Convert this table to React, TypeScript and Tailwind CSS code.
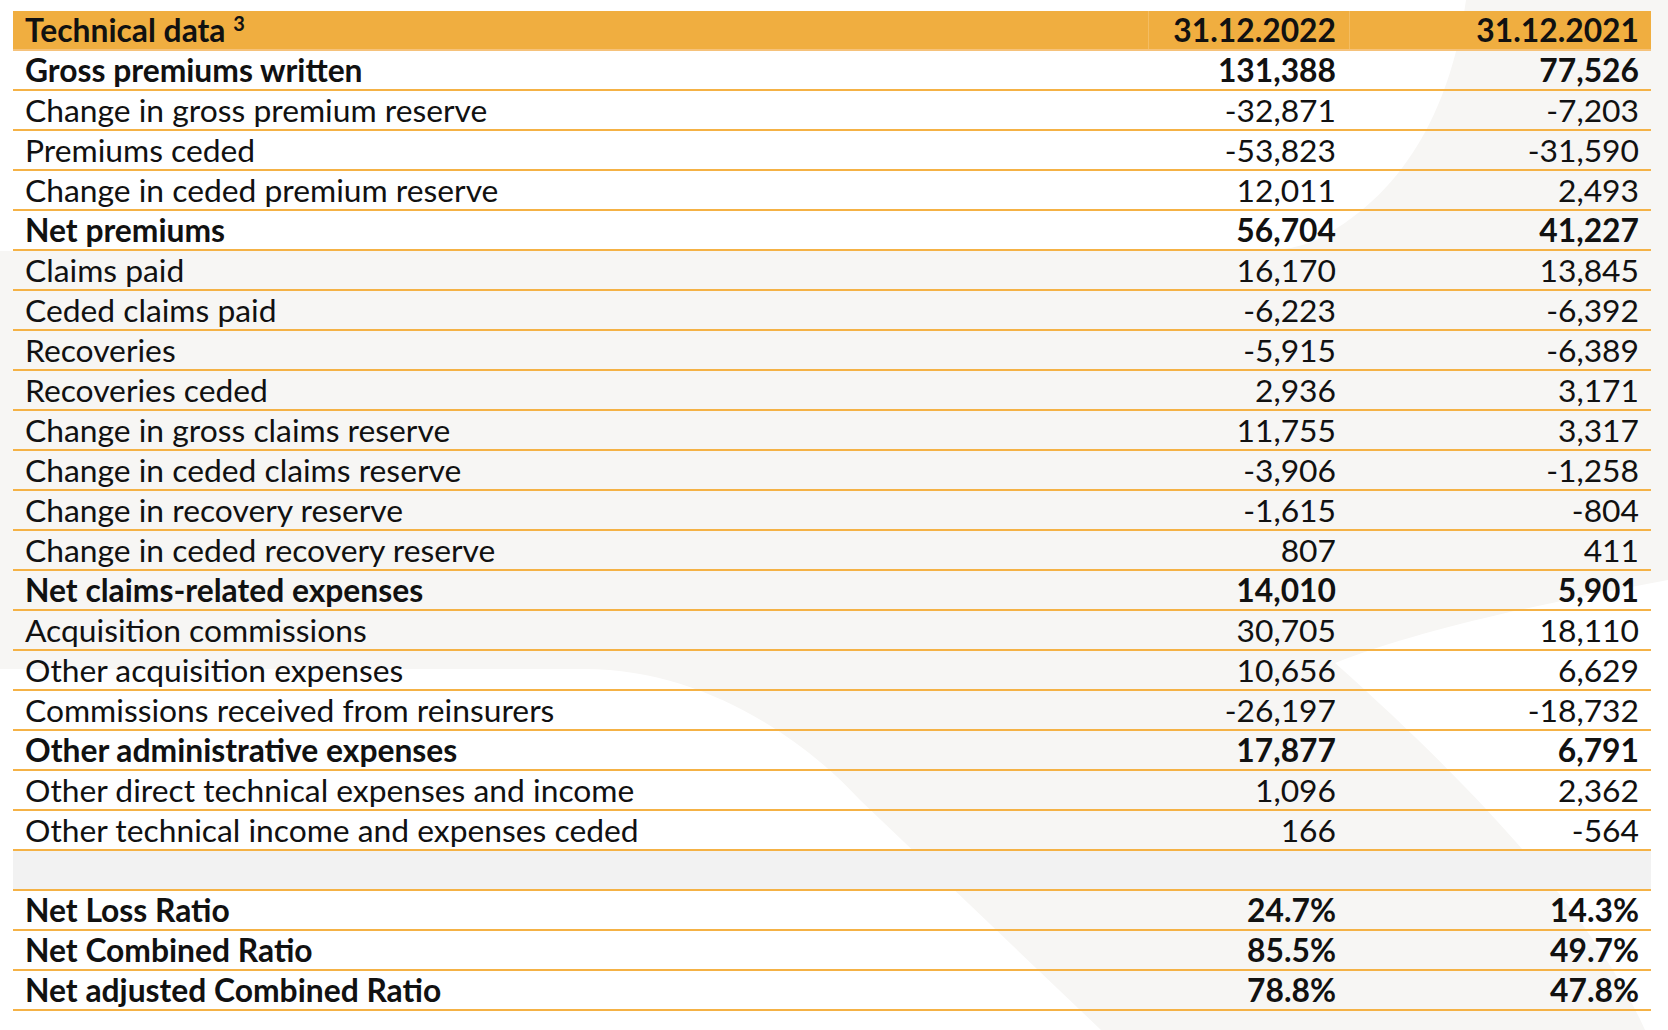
import React from "react";

type Row = { label: string; a: string; b: string; bold?: boolean };

const rows: Row[] = [
  { label: "Gross premiums written", a: "131,388", b: "77,526", bold: true },
  { label: "Change in gross premium reserve", a: "-32,871", b: "-7,203" },
  { label: "Premiums ceded", a: "-53,823", b: "-31,590" },
  { label: "Change in ceded premium reserve", a: "12,011", b: "2,493" },
  { label: "Net premiums", a: "56,704", b: "41,227", bold: true },
  { label: "Claims paid", a: "16,170", b: "13,845" },
  { label: "Ceded claims paid", a: "-6,223", b: "-6,392" },
  { label: "Recoveries", a: "-5,915", b: "-6,389" },
  { label: "Recoveries ceded", a: "2,936", b: "3,171" },
  { label: "Change in gross claims reserve", a: "11,755", b: "3,317" },
  { label: "Change in ceded claims reserve", a: "-3,906", b: "-1,258" },
  { label: "Change in recovery reserve", a: "-1,615", b: "-804" },
  { label: "Change in ceded recovery reserve", a: "807", b: "411" },
  { label: "Net claims-related expenses", a: "14,010", b: "5,901", bold: true },
  { label: "Acquisition commissions", a: "30,705", b: "18,110" },
  { label: "Other acquisition expenses", a: "10,656", b: "6,629" },
  { label: "Commissions received from reinsurers", a: "-26,197", b: "-18,732" },
  { label: "Other administrative expenses", a: "17,877", b: "6,791", bold: true },
  { label: "Other direct technical expenses and income", a: "1,096", b: "2,362" },
  { label: "Other technical income and expenses ceded", a: "166", b: "-564" },
];

const ratios: Row[] = [
  { label: "Net Loss Ratio", a: "24.7%", b: "14.3%", bold: true },
  { label: "Net Combined Ratio", a: "85.5%", b: "49.7%", bold: true },
  { label: "Net adjusted Combined Ratio", a: "78.8%", b: "47.8%", bold: true },
];

function DataRow({ r }: { r: Row }) {
  return (
    <div
      className={`grid grid-cols-[1135px_201px_302px] h-[40px] border-b-2 border-[#f5b245] text-[31.8px] leading-[38px] text-[#111] ${
        r.bold ? "font-bold" : "font-normal"
      }`}
    >
      <div className="pl-[12px] whitespace-nowrap">{r.label}</div>
      <div className="pr-[13px] text-right">{r.a}</div>
      <div className="pr-[12px] text-right">{r.b}</div>
    </div>
  );
}

function Background() {
  return (
    <svg
      className="absolute inset-0"
      width="1668"
      height="1030"
      viewBox="0 0 1668 1030"
      aria-hidden="true"
    >
      <rect x="0" y="0" width="1668" height="1030" fill="#f7f6f4" />
      <path
        d="M0 0 H1466 C1452 100 1410 190 1320 238 C1300 248 1280 251 1250 251 H0 Z"
        fill="#ffffff"
      />
      <path
        d="M0 669 H585 C700 669 800 735 860 800 L1101 1030 H0 Z"
        fill="#ffffff"
      />
      <path
        d="M1335 663 C1420 630 1520 608 1668 580 V1030 H1645 C1600 930 1500 810 1335 663 Z"
        fill="#ffffff"
      />
    </svg>
  );
}

export default function App() {
  return (
    <div
      className="relative w-[1668px] h-[1030px] overflow-hidden bg-white"
      style={{ fontFamily: "Lato, 'Noto Sans', sans-serif" }}
    >
      <Background />
      <div className="relative pl-[13px] pt-[11px]">
        <div className="w-[1638px]">
          <div className="grid grid-cols-[1135px_201px_302px] h-[40px] bg-[#f0ae40] border-b-2 border-[#f6c27a] text-[31.8px] leading-[38px] font-bold text-[#111]">
            <div className="pl-[12px] whitespace-nowrap">
              Technical data{" "}
              <span className="relative -top-[11px] text-[20px] leading-none">3</span>
            </div>
            <div className="pr-[13px] text-right border-l border-[#f4bd62]">31.12.2022</div>
            <div className="pr-[12px] text-right border-l border-[#f4bd62]">31.12.2021</div>
          </div>
          {rows.map((r) => (
            <DataRow key={r.label} r={r} />
          ))}
          <div className="h-[40px] bg-[#f2f2f2] border-b-2 border-[#f5b245]" />
          {ratios.map((r) => (
            <DataRow key={r.label} r={r} />
          ))}
        </div>
      </div>
    </div>
  );
}
